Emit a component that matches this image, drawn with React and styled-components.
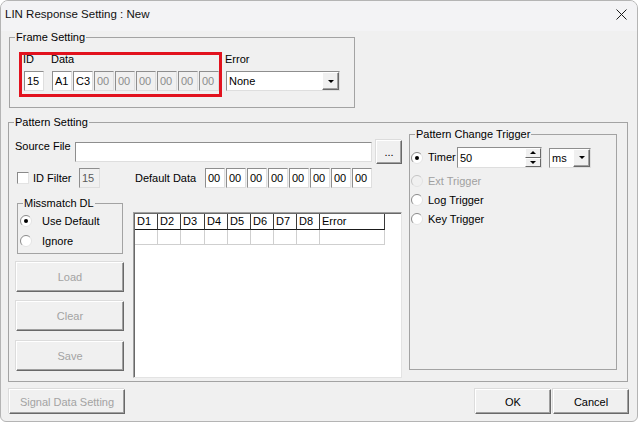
import React from 'react'
import styled, { createGlobalStyle } from 'styled-components'

const GlobalStyle = createGlobalStyle`
  * { box-sizing: border-box; }
  body {
    margin: 0;
    background: #fff;
    font-family: "Liberation Sans", Arial, sans-serif;
    font-size: 11px;
    color: #000;
  }
`

const Window = styled.div`
  width: 638px;
  height: 422px;
  border: 1px solid #b4b4b4;
  border-radius: 8px 8px 6px 6px;
  background: #f0f0f0;
  overflow: hidden;
  display: flex;
  flex-direction: column;
`

const TitleBar = styled.div`
  height: 30px;
  flex: none;
  display: flex;
  justify-content: space-between;
  align-items: flex-start;
  padding: 6px 10px 0 4px;
  background: #f3f3f5;
`

const Title = styled.div`
  font-size: 11.5px;
  line-height: 15px;
  color: #111;
`

const CloseIcon = styled.svg`
  margin-top: 2px;
`

const Body = styled.div`
  display: flex;
  flex-direction: column;
  padding-left: 7px;
`

const Group = styled.fieldset`
  margin: 0;
  padding: 0;
  min-width: 0;
  width: ${p => p.$w}px;
  height: ${p => p.$h}px;
  border: 1px solid #a3a3a3;
`

const Legend = styled.legend`
  margin-left: 5px;
  padding: 0 1px;
  line-height: 13px;
  font-size: 11px;
`

const FrameGroup = styled(Group)`
  margin-left: 1px;
`

const FrameContent = styled.div`
  display: flex;
  align-items: flex-start;
  padding: 8px 0 0 9px;
`

const Highlight = styled.div`
  display: flex;
  gap: 8px;
  border: 3px solid #e2121e;
  padding: 0 0 3px 2px;
`

const Column = styled.div`
  display: flex;
  flex-direction: column;
  padding-top: ${p => p.$top || 0}px;
  margin-left: ${p => p.$left || 0}px;
`

const ColLabel = styled.div`
  line-height: 13px;
  margin: -2px 0 5px -1px;
`

const Cells = styled.div`
  display: flex;
  gap: 1px;
`

const Field = styled.div`
  width: ${p => p.$w}px;
  height: ${p => p.$h || 20}px;
  flex: none;
  display: flex;
  align-items: center;
  padding-left: 2px;
  background: ${p => (p.$off ? '#f0f0f0' : '#fff')};
  color: ${p => (p.$off ? '#8c8c8c' : '#000')};
  border: 1px solid;
  border-color: #8e8e8e #dedede #dedede #8e8e8e;
  white-space: nowrap;
  overflow: hidden;
`

const Combo = styled(Field)`
  justify-content: space-between;
  padding: 0 0 0 2px;
`

const DropBtn = styled.div`
  width: 17px;
  height: 18px;
  display: flex;
  align-items: center;
  justify-content: center;
  background: #f0f0f0;
  border: 1px solid;
  border-color: #fff #696969 #696969 #fff;
  box-shadow: inset -1px -1px 0 #a0a0a0;
`

const Tri = styled.span`
  width: 0;
  height: 0;
  border-left: ${p => p.$s}px solid transparent;
  border-right: ${p => p.$s}px solid transparent;
  ${p => (p.$up ? 'border-bottom' : 'border-top')}: ${p => p.$s}px solid #000;
`

const PatternGroup = styled(Group)`
  margin-top: 8px;
`

const PatternContent = styled.div`
  display: flex;
  align-items: flex-start;
  padding-left: 6px;
`

const LeftCol = styled.div`
  width: 387px;
  padding-top: 11px;
  display: flex;
  flex-direction: column;
`

const Row = styled.div`
  display: flex;
  align-items: ${p => p.$align || 'center'};
  height: ${p => p.$h}px;
  margin-top: ${p => p.$mt || 0}px;
`

const Label = styled.div`
  width: ${p => p.$w}px;
  margin-left: ${p => p.$ml || 0}px;
  line-height: 13px;
  flex: none;
  color: ${p => (p.$off ? '#a0a0a0' : '#000')};
  white-space: nowrap;
`

const Button = styled.button`
  width: ${p => p.$w}px;
  height: ${p => p.$h || 25}px;
  margin-top: ${p => p.$mt || 0}px;
  margin-left: ${p => p.$ml || 0}px;
  flex: none;
  padding: 0;
  font-family: inherit;
  font-size: 11px;
  color: ${p => (p.disabled ? '#a3a3a3' : '#000')};
  background: #f0f0f0;
  border: 1px solid;
  border-color: #fff #696969 #696969 #fff;
  box-shadow: inset -1px -1px 0 #a0a0a0, -1px -1px 0 #dcdcdc;
`

const CheckBox = styled.span`
  width: 12px;
  height: 12px;
  margin-left: 2px;
  flex: none;
  background: #fff;
  border: 1px solid;
  border-color: #8a8a8a #e3e3e3 #e3e3e3 #8a8a8a;
`

const SideCol = styled.div`
  width: 108px;
  margin-left: 1px;
  display: flex;
  flex-direction: column;
`

const MismatchGroup = styled(Group)`
  margin: 0 1px;
`

const RadioList = styled.div`
  padding: 1px 0 0 2px;
`

const RadioRow = styled.div`
  display: flex;
  align-items: center;
  height: ${p => p.$h || 20}px;
  gap: ${p => p.$gap || 10}px;
  color: ${p => (p.$off ? '#a0a0a0' : '#000')};
`

const ListBox = styled.div`
  width: 269px;
  height: 166px;
  margin: 15px 0 0 9px;
  background: #fff;
  border: 1px solid;
  border-color: #a0a0a0 #e3e3e3 #e3e3e3 #a0a0a0;
  box-shadow: inset 1px 1px 0 #696969;
  padding: 1px 0 0 1px;
`

const Grid = styled.div`
  display: grid;
  grid-template-columns: 23px 23px 24px 23px 23px 23px 23px 23px 65px;
`

const Cell = styled.div`
  height: ${p => (p.$head ? 16 : 15)}px;
  line-height: 14px;
  padding-left: 2px;
  border-right: 1px solid ${p => (p.$head ? '#3a3a3a' : '#cfcfcf')};
  border-bottom: 1px solid ${p => (p.$head ? '#1a1a1a' : '#cfcfcf')};
`

const TriggerGroup = styled(Group)`
  margin: -1px 0 0 7px;
`

const TriggerContent = styled.div`
  padding: 6px 0 0 1px;
`

const Spinner = styled.div`
  width: 16px;
  height: 19px;
  display: flex;
  flex-direction: column;
`

const SpinBtn = styled.div`
  flex: 1;
  display: flex;
  align-items: center;
  justify-content: center;
  background: #f0f0f0;
  border: 1px solid;
  border-color: #fff #696969 #696969 #fff;
`

const TimerField = styled(Field)`
  justify-content: space-between;
  padding: 0 0 0 2px;
`

const BottomBar = styled.div`
  display: flex;
  justify-content: space-between;
  margin-top: 7px;
  padding: 0 8px 0 8px;
`

const Radio = ({ checked, off }) => (
  <svg width="12" height="12" viewBox="0 0 12 12">
    <circle cx="6" cy="6" r="5.5" fill={off ? '#f0f0f0' : '#fff'} />
    <path d="M2.1 9.9 A5.5 5.5 0 0 1 9.9 2.1" stroke={off ? '#c4c4c4' : '#8a8a8a'} fill="none" />
    <path d="M9.9 2.1 A5.5 5.5 0 0 1 2.1 9.9" stroke="#e3e3e3" fill="none" />
    {checked && <circle cx="6" cy="6" r="2" fill="#000" />}
  </svg>
)

const frameData = ['00', '00', '00', '00', '00', '00']
const defaults = ['00', '00', '00', '00', '00', '00', '00', '00']
const cols = ['D1', 'D2', 'D3', 'D4', 'D5', 'D6', 'D7', 'D8', 'Error']

const App = () => {
  return (
    <>
      <GlobalStyle />
      <Window>
        <TitleBar>
          <Title>LIN Response Setting : New</Title>
          <CloseIcon width="11" height="11" viewBox="0 0 11 11">
            <path d="M0.5 0.5 L10.5 10.5 M10.5 0.5 L0.5 10.5" stroke="#1a1a1a" strokeWidth="1" />
          </CloseIcon>
        </TitleBar>
        <Body>
          <FrameGroup $w={346} $h={77}>
            <Legend>Frame Setting</Legend>
            <FrameContent>
              <Highlight>
                <Column>
                  <ColLabel>ID</ColLabel>
                  <Field $w={20}>15</Field>
                </Column>
                <Column>
                  <ColLabel>Data</ColLabel>
                  <Cells>
                    <Field $w={20}>A1</Field>
                    <Field $w={20}>C3</Field>
                    {frameData.map((d, i) => (
                      <Field key={i} $w={20} $off>{d}</Field>
                    ))}
                  </Cells>
                </Column>
              </Highlight>
              <Column $top={3} $left={4}>
                <ColLabel>Error</ColLabel>
                <Combo $w={114}>
                  None
                  <DropBtn><Tri $s={3.5} /></DropBtn>
                </Combo>
              </Column>
            </FrameContent>
          </FrameGroup>

          <PatternGroup $w={620} $h={266}>
            <Legend>Pattern Setting</Legend>
            <PatternContent>
              <LeftCol>
                <Row $h={24} $align="flex-start">
                  <Label $w={60}>Source File</Label>
                  <Field $w={297} style={{ marginTop: 2 }} />
                  <Button $w={26} $h={24} $ml={4}>...</Button>
                </Row>
                <Row $h={20} $mt={4}>
                  <CheckBox />
                  <Label $w={46} $ml={4}>ID Filter</Label>
                  <Field $w={21} $off style={{ color: '#5a5a5a' }}>15</Field>
                  <Label $w={70} $ml={35}>Default Data</Label>
                  <Cells>
                    {defaults.map((d, i) => (
                      <Field key={i} $w={20}>{d}</Field>
                    ))}
                  </Cells>
                </Row>
                <Row $align="flex-start" $mt={9}>
                  <SideCol>
                    <MismatchGroup $w={106} $h={57}>
                      <Legend>Missmatch DL</Legend>
                      <RadioList>
                        <RadioRow><Radio checked />Use Default</RadioRow>
                        <RadioRow><Radio />Ignore</RadioRow>
                      </RadioList>
                    </MismatchGroup>
                    <Button $w={108} $h={30} $mt={8} disabled>Load</Button>
                    <Button $w={108} $h={30} $mt={9} disabled>Clear</Button>
                    <Button $w={108} $h={30} $mt={10} disabled>Save</Button>
                  </SideCol>
                  <ListBox>
                    <Grid>
                      {cols.map(c => (
                        <Cell key={c} $head>{c}</Cell>
                      ))}
                      {cols.map(c => (
                        <Cell key={'r' + c} />
                      ))}
                    </Grid>
                  </ListBox>
                </Row>
              </LeftCol>

              <TriggerGroup $w={208} $h={242}>
                <Legend>Pattern Change Trigger</Legend>
                <TriggerContent>
                  <Row $h={21}>
                    <Radio checked />
                    <Label $w={29} $ml={5}>Timer</Label>
                    <TimerField $w={85} $h={21}>
                      50
                      <Spinner>
                        <SpinBtn><Tri $s={3} $up /></SpinBtn>
                        <SpinBtn><Tri $s={3} /></SpinBtn>
                      </Spinner>
                    </TimerField>
                    <Combo $w={42} style={{ marginLeft: 7 }}>
                      ms
                      <DropBtn><Tri $s={3.5} /></DropBtn>
                    </Combo>
                  </Row>
                  <div style={{ marginTop: 3 }}>
                    <RadioRow $h={19} $gap={5} $off><Radio off />Ext Trigger</RadioRow>
                    <RadioRow $h={19} $gap={5}><Radio />Log Trigger</RadioRow>
                    <RadioRow $h={19} $gap={5}><Radio />Key Trigger</RadioRow>
                  </div>
                </TriggerContent>
              </TriggerGroup>
            </PatternContent>
          </PatternGroup>
        </Body>
        <BottomBar>
          <Button $w={116} disabled>Signal Data Setting</Button>
          <div>
            <Button $w={76}>OK</Button>
            <Button $w={76} $ml={2}>Cancel</Button>
          </div>
        </BottomBar>
      </Window>
    </>
  )
}

export default App
